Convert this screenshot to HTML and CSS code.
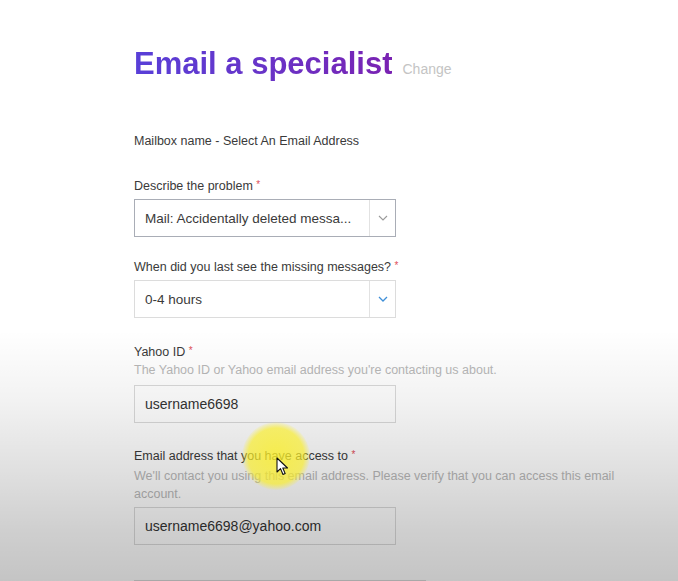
FILE: index.html
```html
<!DOCTYPE html>
<html lang="en">
<head>
<meta charset="utf-8">
<title>Email a specialist</title>
<link rel="stylesheet" href="styles.css">
</head>
<body>
<main class="page">
  <header class="head">
    <h1 class="title">Email a specialist</h1>
    <a class="change">Change</a>
  </header>

  <p class="mailbox">Mailbox name - Select An Email Address</p>

  <div class="field f1">
    <label class="label">Describe the problem <span class="req">*</span></label>
    <div class="select active">
      <span class="value">Mail: Accidentally deleted messa...</span>
      <span class="arrow"><svg width="10" height="6" viewBox="0 0 10 6"><path d="M1 1 L5 5 L9 1" fill="none" stroke="#9a9a9a" stroke-width="1.1"/></svg></span>
    </div>
  </div>

  <div class="field f2">
    <label class="label">When did you last see the missing messages? <span class="req">*</span></label>
    <div class="select">
      <span class="value">0-4 hours</span>
      <span class="arrow"><svg width="10" height="6" viewBox="0 0 10 6"><path d="M1 1 L5 5 L9 1" fill="none" stroke="#3f8fd8" stroke-width="1.3"/></svg></span>
    </div>
  </div>

  <div class="field f3">
    <label class="label">Yahoo ID <span class="req">*</span></label>
    <p class="help">The Yahoo ID or Yahoo email address you're contacting us about.</p>
    <div class="input">username6698</div>
  </div>

  <div class="field f4">
    <label class="label">Email address that you have access to <span class="req">*</span></label>
    <p class="help wrap">We'll contact you using this email address. Please verify that you can access this email account.</p>
    <div class="input">username6698@yahoo.com</div>
  </div>

  <div class="field f5">
    <div class="input wide"></div>
  </div>
</main>

<div class="shade"></div>
<div class="spot"></div>
<svg class="cursor" width="14" height="20" viewBox="0 0 14 20"><path d="M1 1 L1 15 L4.5 11.6 L7 17.5 L9.2 16.6 L6.8 11 L11.5 11 Z" fill="#fff" stroke="#111" stroke-width="1.1" stroke-linejoin="round"/></svg>
</body>
</html>
```

FILE: styles.css
```css
* { box-sizing: border-box; }
html, body { margin: 0; padding: 0; }
body {
  width: 678px;
  height: 581px;
  overflow: hidden;
  background: #fff;
  font-family: "Liberation Sans", Arial, sans-serif;
  color: #3f3f3f;
  position: relative;
}
.page {
  padding: 46px 0 0 134px;
}
.head {
  display: flex;
  align-items: baseline;
  gap: 10px;
  height: 36px;
}
.title {
  margin: 0;
  font-size: 31px;
  line-height: 36px;
  font-weight: 700;
  background: linear-gradient(90deg, #583fd8 0%, #6834c8 50%, #7a22b2 100%);
  -webkit-background-clip: text;
  background-clip: text;
  color: transparent;
}
.change {
  font-size: 14px;
  color: #c4c4c4;
}
.mailbox {
  margin: 51px 0 0;
  font-size: 12.5px;
  line-height: 16px;
  color: #3a3a3a;
}
.field { display: flex; flex-direction: column; }
.f1 { margin-top: 29px; }
.f2 { margin-top: 22px; }
.f3 { margin-top: 26px; }
.f4 { margin-top: 25px; }
.f5 { margin-top: 35px; }
.label {
  font-size: 12.5px;
  line-height: 16px;
  color: #3a3a3a;
  margin-bottom: 4px;
}
.req {
  color: #e0505a;
  font-size: 10px;
  position: relative;
  top: -2px;
}
.help {
  margin: -4px 0 6px;
  font-size: 12.5px;
  line-height: 18px;
  color: #b8b8b8;
}
.help.wrap { width: 492px; margin-top: -2px; margin-bottom: 4px; }
.select {
  width: 262px;
  height: 38px;
  border: 1px solid #dcdcdc;
  display: flex;
  align-items: stretch;
  background: #fff;
}
.select.active { border-color: #a9adb6; }
.select .value {
  flex: 1;
  display: flex;
  align-items: center;
  padding-left: 10px;
  font-size: 13.5px;
  color: #3a3a3a;
  white-space: nowrap;
}
.select .arrow {
  width: 26px;
  border-left: 1px solid #e2e2e2;
  display: flex;
  align-items: center;
  justify-content: center;
}
.input {
  width: 262px;
  height: 38px;
  border: 1px solid #dadada;
  background: #fff;
  display: flex;
  align-items: center;
  padding-left: 10px;
  font-size: 14px;
  color: #333;
}
.input.wide { width: 292px; }
.shade {
  position: absolute;
  inset: 0;
  pointer-events: none;
  background: linear-gradient(180deg,
    rgba(0,0,0,0) 0px,
    rgba(0,0,0,0) 330px,
    rgba(0,0,0,0.05) 400px,
    rgba(0,0,0,0.12) 470px,
    rgba(0,0,0,0.19) 530px,
    rgba(0,0,0,0.23) 581px);
}
.spot {
  position: absolute;
  left: 242px;
  top: 422px;
  width: 68px;
  height: 68px;
  border-radius: 50%;
  background: radial-gradient(circle, rgba(250,238,40,0.8) 0%, rgba(250,238,40,0.68) 58%, rgba(250,238,40,0) 72%);
  pointer-events: none;
}
.cursor {
  position: absolute;
  left: 276px;
  top: 457px;
}
```
